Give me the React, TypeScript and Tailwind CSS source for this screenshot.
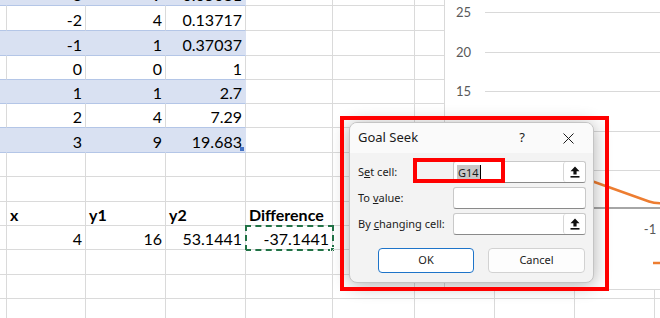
import React from 'react';

type SheetRow = {
  h: string;
  band?: 'blue' | 'white';
  vals?: string[];
  head?: boolean;
  ants?: boolean;
  handle?: boolean;
};

const COLS = [
  'w-[4px]',
  'w-[79px]',
  'w-[80px]',
  'w-[80px]',
  'w-[87px]',
  'w-[82px]',
  'w-[80px]',
  'w-[80px]',
  'w-[80px]',
  'w-[80px]',
];

const rows: SheetRow[] = [
  { h: 'h-[25px]', band: 'white', vals: ['-2', '4', '0.13717'] },
  { h: 'h-[25px]', band: 'blue', vals: ['-1', '1', '0.37037'] },
  { h: 'h-[24px]', band: 'white', vals: ['0', '0', '1'] },
  { h: 'h-[24px]', band: 'blue', vals: ['1', '1', '2.7'] },
  { h: 'h-[24px]', band: 'white', vals: ['2', '4', '7.29'] },
  { h: 'h-[25px]', band: 'blue', vals: ['3', '9', '19.683'], handle: true },
  { h: 'h-[24px]' },
  { h: 'h-[25px]' },
  { h: 'h-[24px]', head: true, vals: ['x', 'y1', 'y2', 'Difference'] },
  { h: 'h-[24px]', vals: ['4', '16', '53.1441', '-37.1441'], ants: true },
  { h: 'h-[25px]' },
  { h: 'h-[24px]' },
  { h: 'h-[24px]' },
];

function Row({ row }: { row: SheetRow }) {
  return (
    <div className={`flex ${row.h}`}>
      {COLS.map((w, i) => {
        const inTable = row.band && i < 4;
        let tone = 'border-r-[#dadada] border-b-[#dadada]';
        if (inTable && row.band === 'blue') tone = 'bg-[#d9e1f2] border-r-[#d9e1f2] border-b-[#b4c6e7]';
        if (inTable && row.band === 'white') tone = 'bg-white border-r-[#dadada] border-b-[#b4c6e7]';
        const val = i >= 1 && row.vals ? row.vals[i - 1] : undefined;
        return (
          <div
            key={i}
            className={`relative shrink-0 ${w} border-r border-b ${tone} flex items-end px-[3px] pb-[1px] leading-[19px] ${
              row.head ? 'justify-start font-bold' : 'justify-end'
            }`}
          >
            {val}
            {row.ants && i === 4 && (
              <div className="absolute -left-px -top-px w-[89px] h-[26px] border-2 border-dashed border-[#217346]">
                <div className="absolute -right-[3px] -bottom-[3px] w-[5px] h-[5px] bg-[#217346] border border-white" />
              </div>
            )}
            {row.handle && i === 3 && (
              <div className="absolute right-[1px] bottom-[1px] w-[4px] h-[4px] bg-[#4472c4]" />
            )}
          </div>
        );
      })}
    </div>
  );
}

function UploadIcon() {
  return (
    <svg width="10" height="12" viewBox="0 0 10 12">
      <path d="M5 0.5 L9.5 5.2 H6.6 V8.6 H3.4 V5.2 H0.5 Z" fill="#111" />
      <rect x="0.5" y="10" width="9" height="1.6" fill="#111" />
    </svg>
  );
}

function Field({ label, picker, text }: { label: React.ReactNode; picker?: boolean; text?: React.ReactNode }) {
  return (
    <div className="flex items-center h-[22px]">
      <div className="w-[103px] pl-[8px] text-[11px] text-[#1b1b1b]">{label}</div>
      <div className="w-[133px] h-[22px] flex bg-white border border-[#c9c9c9] border-b-[#8a8a8a] rounded-[3px]">
        <div className="flex-1 flex items-center pl-[3px] text-[11px]">{text}</div>
        {picker && (
          <div className="w-[22px] h-[20px] flex items-center justify-center bg-white border-l border-[#d6d6d6] rounded-[3px]">
            <UploadIcon />
          </div>
        )}
      </div>
    </div>
  );
}

export default function App() {
  return (
    <div className="relative w-[660px] h-[318px] overflow-hidden bg-white font-['Lato',sans-serif] text-[16px] text-black">
      {/* sheet */}
      <div className="flex flex-col">
        <div className="h-[6px] overflow-hidden">
          <div className="-mt-[18px]">
            <Row row={{ h: 'h-[24px]', band: 'blue', vals: ['-3', '9', '0.05081'] }} />
          </div>
        </div>
        {rows.map((r, i) => (
          <Row key={i} row={r} />
        ))}
      </div>

      {/* chart */}
      <div className="absolute left-[444px] top-0 w-[240px] h-[290px] bg-white border-l border-b border-[#d9d9d9]">
        <svg width="240" height="289" className="font-['Lato',sans-serif]">
          {[
            ['25', 12.5],
            ['20', 52.5],
            ['15', 91.5],
            ['10', 131.5],
            ['5', 170.5],
          ].map(([t, y]) => (
            <g key={t as string}>
              <line x1="40" x2="240" y1={y as number} y2={y as number} stroke="#d9d9d9" strokeWidth="1" />
              <text x="26" y={(y as number) + 4.5} textAnchor="end" fontSize="13" fill="#595959">
                {t}
              </text>
            </g>
          ))}
          <text x="26" y="213" textAnchor="end" fontSize="13" fill="#595959">0</text>
          <line x1="40" x2="240" y1="208" y2="208" stroke="#a6a6a6" strokeWidth="2.2" />
          <path d="M60 150 L204 201.5 Q210 203.5 220 203.5" fill="none" stroke="#ed7d31" strokeWidth="2.5" />
          <text x="205" y="234" textAnchor="middle" fontSize="13" fill="#595959">-1</text>
          <line x1="208" x2="230" y1="263" y2="263" stroke="#ed7d31" strokeWidth="2.5" />
        </svg>
      </div>

      {/* Goal Seek dialog */}
      <div className="absolute left-[349px] top-[122px] w-[245px] h-[161px] flex flex-col rounded-[8px] overflow-hidden bg-[#f3f3f3] border border-[#c4c4c4] shadow-[0_2px_18px_rgba(0,0,0,0.32)] font-['Noto_Sans',sans-serif] text-[#1b1b1b]">
        <div className="h-[30px] flex items-center bg-[#fafafa]">
          <div className="pl-[8px] text-[13px]">Goal Seek</div>
          <div className="ml-auto w-[46px] flex justify-center text-[13px]">?</div>
          <div className="w-[46px] mr-[2px] flex justify-center">
            <svg width="11" height="11" viewBox="0 0 11 11">
              <path d="M0.5 0.5 L10.5 10.5 M10.5 0.5 L0.5 10.5" stroke="#1b1b1b" strokeWidth="1" />
            </svg>
          </div>
        </div>
        <div className="flex flex-col gap-[4px] pt-[8px]">
          <Field
            label={<>S<u>e</u>t cell:</>}
            picker
            text={
              <span className="flex items-center">
                <span className="bg-[#c8c8c8] leading-[15px] px-px">G14</span>
                <span className="w-px h-[14px] bg-black" />
              </span>
            }
          />
          <Field label={<>To <u>v</u>alue:</>} />
          <Field label={<>By <u>c</u>hanging cell:</>} picker />
        </div>
        <div className="flex gap-[14px] pl-[28px] mt-[13px]">
          <button className="w-[96px] h-[25px] rounded-[4px] bg-white border border-[#1e74c9] text-[11px]">OK</button>
          <button className="w-[97px] h-[25px] rounded-[4px] bg-[#fdfdfd] border border-[#d2d2d2] text-[11px]">Cancel</button>
        </div>
      </div>

      {/* annotation boxes */}
      <div className="absolute left-[340px] top-[116px] w-[269px] h-[175px] border-4 border-[#ff0000]" />
      <div className="absolute left-[413px] top-[158px] w-[92px] h-[25px] border-4 border-[#ff0000]" />
    </div>
  );
}
